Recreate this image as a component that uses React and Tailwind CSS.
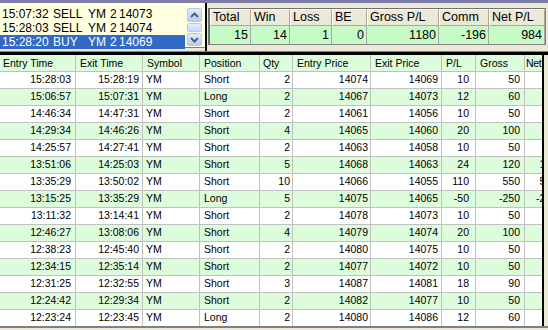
import React from 'react';

const orders = [
    { time: '15:07:32', side: 'SELL', qty: '2', price: '14073' },
    { time: '15:28:03', side: 'SELL', qty: '2', price: '14074' },
    { time: '15:28:20', side: 'BUY', qty: '2', price: '14069', selected: true },
];

const summary = [
    { label: 'Total', value: '15', w: 'w-[41px]' },
    { label: 'Win', value: '14', w: 'w-[39px]' },
    { label: 'Loss', value: '1', w: 'w-[42px]' },
    { label: 'BE', value: '0', w: 'w-[35px]' },
    { label: 'Gross P/L', value: '1180', w: 'w-[72px]' },
    { label: 'Comm', value: '-196', w: 'w-[50px]' },
    { label: 'Net P/L', value: '984', w: 'w-[56px]' },
];

// column widths + alignment for the trade grid
const columns = [
    { name: 'Entry Time', w: 'w-[76px]', head: 'pl-[3px]', cell: 'justify-end pr-[4px]' },
    { name: 'Exit Time', w: 'w-[67px]', head: 'pl-[4px]', cell: 'justify-end pr-[3px]' },
    { name: 'Symbol', w: 'w-[57px]', head: 'pl-[4px]', cell: 'justify-start pl-[3px]' },
    { name: 'Position', w: 'w-[60px]', head: 'pl-[4px]', cell: 'justify-start pl-[4px]' },
    { name: 'Qty', w: 'w-[33px]', head: 'pl-[3px]', cell: 'justify-end pr-[2px]' },
    { name: 'Entry Price', w: 'w-[78px]', head: 'pl-[4px]', cell: 'justify-end pr-[2px]' },
    { name: 'Exit Price', w: 'w-[71px]', head: 'pl-[4px]', cell: 'justify-end pr-[3px]' },
    { name: 'P/L', w: 'w-[34px]', head: 'pl-[4px]', cell: 'justify-end pr-[6px]' },
    { name: 'Gross', w: 'w-[49px]', head: 'pl-[4px]', cell: 'justify-end pr-[4px]' },
    { name: 'Net', w: 'w-[38px]', head: 'pl-[1px] tracking-[-0.3px]', cell: 'justify-end pr-[5px]' },
];

const trades = [
    ['15:28:03', '15:28:19', 'YM', 'Short', '2', '14074', '14069', '10', '50', '42'],
    ['15:06:57', '15:07:31', 'YM', 'Long', '2', '14067', '14073', '12', '60', '52'],
    ['14:46:34', '14:47:31', 'YM', 'Short', '2', '14061', '14056', '10', '50', '42'],
    ['14:29:34', '14:46:26', 'YM', 'Short', '4', '14065', '14060', '20', '100', '84'],
    ['14:25:57', '14:27:41', 'YM', 'Short', '2', '14063', '14058', '10', '50', '42'],
    ['13:51:06', '14:25:03', 'YM', 'Short', '5', '14068', '14063', '24', '120', '100'],
    ['13:35:29', '13:50:02', 'YM', 'Short', '10', '14066', '14055', '110', '550', '510'],
    ['13:15:25', '13:35:29', 'YM', 'Long', '5', '14075', '14065', '-50', '-250', '-270'],
    ['13:11:32', '13:14:41', 'YM', 'Short', '2', '14078', '14073', '10', '50', '42'],
    ['12:46:27', '13:08:06', 'YM', 'Short', '4', '14079', '14074', '20', '100', '84'],
    ['12:38:23', '12:45:40', 'YM', 'Short', '2', '14080', '14075', '10', '50', '42'],
    ['12:34:15', '12:35:14', 'YM', 'Short', '2', '14077', '14072', '10', '50', '42'],
    ['12:31:25', '12:32:55', 'YM', 'Short', '3', '14087', '14081', '18', '90', '78'],
    ['12:24:42', '12:29:34', 'YM', 'Short', '2', '14082', '14077', '10', '50', '42'],
    ['12:23:24', '12:23:45', 'YM', 'Long', '2', '14080', '14086', '12', '60', '52'],
];

const ScrollButton = ({ up, h }) => (
    <div className={`${h} w-[15px] rounded-[2px] border border-[#b4c8f6] bg-gradient-to-b from-[#e3ecfe] to-[#b8ccf9] flex items-center justify-center`}>
        <svg width="9" height="6" viewBox="0 0 9 6">
            <path
                d={up ? 'M1 5 L4.5 1.5 L8 5' : 'M1 1 L4.5 4.5 L8 1'}
                fill="none"
                stroke="#4d6185"
                strokeWidth="2"
            />
        </svg>
    </div>
);

export default function App() {
    return (
        <div className="w-[548px] h-[330px] overflow-hidden bg-[#ece9d8] font-['Liberation_Sans',Arial,sans-serif] text-black">

            {/* Top strip: order list + summary */}
            <div className="h-[51px] flex flex-col">
                <div className="h-[3px] bg-[#7c7ca6]" />
                <div className="flex flex-1">
                    {/* order list */}
                    <div className="w-[205px] h-[45px] bg-[#ffffe1] flex border-b border-[#808080]">
                        <div className="w-[187px] pt-[4px] text-[12px] leading-[14px]">
                            {orders.map((o) => (
                                <div
                                    key={o.time}
                                    className={`relative h-[14px] w-[185px] ${o.selected ? 'bg-[#316ac5] text-white' : ''}`}
                                >
                                    <span className="absolute left-[2px] top-0">{o.time}</span>
                                    <span className="absolute left-[53px] top-0">{o.side}</span>
                                    <span className="absolute left-[88px] top-0">YM</span>
                                    <span className="absolute left-[110px] top-0">{o.qty}</span>
                                    <span className="absolute left-[119px] top-0">{o.price}</span>
                                </div>
                            ))}
                        </div>
                        <div className="w-[18px] pt-[5px] flex flex-col items-start gap-[1px]">
                            <ScrollButton up h="h-[14px]" />
                            <div className="h-[9px] w-[15px] rounded-[2px] border border-[#b4c8f6] bg-gradient-to-b from-[#e3ecfe] to-[#c6d6fb]" />
                            <ScrollButton h="h-[13px]" />
                        </div>
                    </div>
                    <div className="w-[2px] bg-black" />

                    {/* summary grid */}
                    <div className="flex-1 pt-[5px] pl-[1px]">
                        <div className="w-[338px] border-l-2 border-t border-[#707070] border-r border-b border-r-[#808080] border-b-[#808080] text-[12.5px]">
                            <div className="flex h-[17px] bg-[#ece9d8]">
                                {summary.map((s) => (
                                    <div
                                        key={s.label}
                                        className={`${s.w} border-l border-t border-white border-r border-b border-r-[#aca899] border-b-[#aca899] pl-[2px] leading-[15px]`}
                                    >
                                        {s.label}
                                    </div>
                                ))}
                            </div>
                            <div className="flex h-[18px] bg-[#c6fbc6]">
                                {summary.map((s) => (
                                    <div
                                        key={s.label}
                                        className={`${s.w} border-r border-[#a8a8a8] text-right pr-[2px] leading-[18px]`}
                                    >
                                        {s.value}
                                    </div>
                                ))}
                            </div>
                        </div>
                    </div>
                </div>
            </div>

            <div className="h-[1px] bg-[#808080]" />
            <div className="h-[3px] bg-black" />

            {/* Trades grid */}
            <div className="flex h-[271px]">
                <div className="w-[542px] overflow-hidden text-[10.5px]">
                    <div className="flex h-[17px] bg-[#dcfcdc] border-b border-[#c0c0c0]">
                        {columns.map((c) => (
                            <div
                                key={c.name}
                                className={`${c.w} shrink-0 border-r border-[#c0c0c0] ${c.head} leading-[16px]`}
                            >
                                {c.name}
                            </div>
                        ))}
                    </div>
                    {trades.map((row, r) => (
                        <div
                            key={r}
                            className={`flex h-[17px] border-b border-[#c0c0c0] ${r % 2 === 1 ? 'bg-[#dcfcdc]' : 'bg-white'}`}
                        >
                            {row.map((v, i) => (
                                <div
                                    key={i}
                                    className={`${columns[i].w} shrink-0 flex items-center border-r border-[#c0c0c0] ${columns[i].cell}`}
                                >
                                    {v}
                                </div>
                            ))}
                        </div>
                    ))}
                </div>
                <div className="w-[2px] bg-black" />
            </div>

            <div className="h-[2px] bg-[#808080]" />
        </div>
    );
}
